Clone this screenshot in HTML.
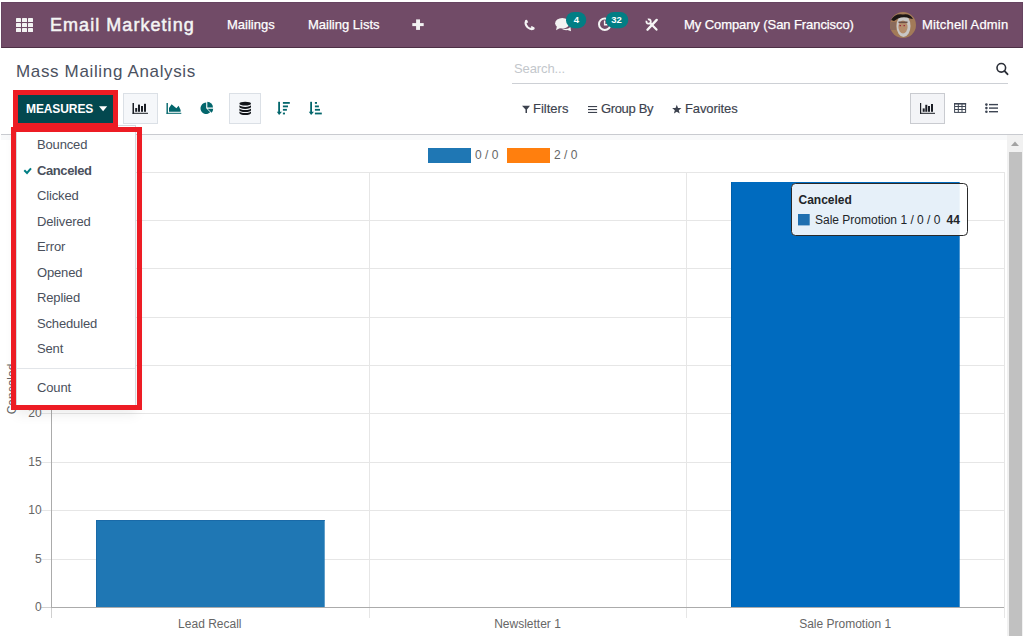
<!DOCTYPE html>
<html><head><meta charset="utf-8">
<style>
*{box-sizing:border-box;}
html,body{margin:0;padding:0;}
body{width:1024px;height:637px;position:relative;overflow:hidden;background:#fff;font-family:"Liberation Sans",sans-serif;}
.a{position:absolute;white-space:nowrap;}
#nav{position:absolute;left:1px;top:2px;width:1022px;height:46px;background:#714B67;border:1px solid #674461;border-bottom-color:#4d2f45;}
.nt{color:#fff;font-size:13px;line-height:16px;-webkit-text-stroke:0.25px #fff;}
#cp{position:absolute;left:1px;top:48px;width:1022px;height:87px;background:#fff;border-bottom:1px solid #c9cbd0;}
.ct{color:#3c424e;font-size:13px;line-height:16px;-webkit-text-stroke:0.15px #3c424e;}
.mi{color:#4a505c;font-size:13px;line-height:16px;left:37px;letter-spacing:-0.15px;}
.ax{color:#666;font-size:12px;line-height:14px;}
</style></head><body>

<!-- NAVBAR -->
<div id="nav"></div>
<svg class="a" style="left:0;top:0" width="1024" height="48">
  <g fill="#f3f3f3">
    <rect x="16" y="18" width="5" height="4" rx="0.6"/><rect x="22" y="18" width="5" height="4" rx="0.6"/><rect x="28" y="18" width="5" height="4" rx="0.6"/>
    <rect x="16" y="23" width="5" height="4" rx="0.6"/><rect x="22" y="23" width="5" height="4" rx="0.6"/><rect x="28" y="23" width="5" height="4" rx="0.6"/>
    <rect x="16" y="28" width="5" height="4" rx="0.6"/><rect x="22" y="28" width="5" height="4" rx="0.6"/><rect x="28" y="28" width="5" height="4" rx="0.6"/>
  </g>
</svg>
<div class="a" style="left:50px;top:15px;color:#f4f4f4;font-size:18px;letter-spacing:1.05px;-webkit-text-stroke:0.5px #f4f4f4;line-height:20px;">Email Marketing</div>
<div class="a nt" style="left:227px;top:17px;">Mailings</div>
<div class="a nt" style="left:308px;top:17px;">Mailing Lists</div>
<svg class="a" style="left:0;top:0" width="430" height="40"><rect x="416.1" y="19.4" width="3.9" height="10.5" fill="#f2f2f2"/><rect x="412.3" y="23.1" width="11.4" height="3" fill="#f2f2f2"/></svg>

<div class="a nt" style="left:684px;top:17px;letter-spacing:-0.08px;">My Company (San Francisco)</div>
<svg class="a" style="left:0;top:0" width="1024" height="48">
  <path d="M526.2 20.8 Q524.4 23.9 527.6 27.2 Q530.8 30.1 533.6 28.5" fill="none" stroke="#f4f4f4" stroke-width="2.1" stroke-linecap="round"/>
  <path d="M525 21 L526.8 19.7 L528.2 22.3 L526.7 23.3 Z M530.5 27.3 L531.7 25.9 L534.5 27.5 L533.6 29.3 Z" fill="#f4f4f4"/>
  <ellipse cx="562.3" cy="23.2" rx="7.2" ry="5.2" fill="#f2f2f2"/>
  <path d="M557 26 L556 30.2 L561 27.6 Z" fill="#f2f2f2"/>
  <path d="M563 28.4 Q567 30 570.5 27 L571 31.2 L567.5 30 Q564.5 30.5 562 29 Z" fill="#f2f2f2"/>
  <rect x="566" y="12" width="20.2" height="16.2" rx="8" fill="#017e84"/>
  <text x="576.4" y="22.5" text-anchor="middle" font-family="Liberation Sans" font-size="9.5" font-weight="bold" fill="#fff">4</text>
  <circle cx="604.8" cy="24.2" r="5.8" fill="none" stroke="#f4f4f4" stroke-width="2"/>
  <path d="M604.6 20.5 L604.6 24.8 L607.5 24.8" fill="none" stroke="#f4f4f4" stroke-width="1.4"/>
  <rect x="605.8" y="12" width="22.4" height="16.2" rx="8" fill="#017e84"/>
  <text x="616.6" y="22.5" text-anchor="middle" font-family="Liberation Sans" font-size="9.5" font-weight="bold" fill="#fff">32</text>
  <path d="M656.7 19.9 L647.5 29.7" stroke="#f6f6f6" stroke-width="2.4" stroke-linecap="round"/>
  <path d="M650.6 23.6 L656.5 29.6" stroke="#f6f6f6" stroke-width="2.2" stroke-linecap="round"/>
  <path d="M647.85 19.43 A2.2 2.2 0 1 1 646.53 20.75" fill="none" stroke="#f6f6f6" stroke-width="1.8"/>
  <clipPath id="av"><circle cx="903" cy="25" r="13"/></clipPath>
  <g clip-path="url(#av)">
    <rect x="889" y="11" width="28" height="28" fill="#a27a58"/>
    <rect x="890" y="22" width="6" height="8" fill="#8a6b5c"/>
    <ellipse cx="903.5" cy="26" rx="7" ry="11" fill="#c9c7c6"/>
    <ellipse cx="903" cy="27" rx="4.6" ry="6.5" fill="#b58d6c"/>
    <path d="M891 20 Q895 13 903 14.5 Q910 13 913 19 L910 18.5 Q904 16 898 18.5 L894 21 Z" fill="#1c1614"/>
    <rect x="898.5" y="21.5" width="9" height="1.6" fill="#6b5046"/>
    <rect x="899.5" y="25" width="1.5" height="1.2" fill="#9a2a3a"/><rect x="903.5" y="25" width="1.5" height="1.2" fill="#9a2a3a"/>
  </g>
</svg>
<div class="a nt" style="left:922px;top:17px;letter-spacing:0.18px;">Mitchell Admin</div>

<!-- CONTROL PANEL -->
<div id="cp"></div>
<div class="a" style="left:16px;top:62px;color:#4b5160;font-size:17px;line-height:20px;letter-spacing:0.65px;">Mass Mailing Analysis</div>
<div class="a" style="left:514px;top:61px;color:#c3c7cc;font-size:13px;line-height:16px;letter-spacing:-0.1px;">Search...</div>
<div class="a" style="left:512px;top:83px;width:496px;height:1px;background:#cdd0d5;"></div>


<!-- buttons row -->


<div class="a" style="left:123px;top:93px;width:35px;height:31px;background:#f5f7fa;border:1px solid #dbe0e6;"></div>
<div class="a" style="left:229px;top:93px;width:32px;height:31px;background:#f5f7fa;border:1px solid #dbe0e6;"></div>
<div class="a" style="left:910px;top:93px;width:35px;height:31px;background:#f3f4f7;border:1px solid #c9cbd0;"></div>

<svg class="a" style="left:0;top:0" width="1024" height="130">
  <g fill="#1b1e25">
    <rect x="132.5" y="103" width="1.5" height="10.8"/><rect x="132.5" y="112.8" width="15.5" height="1"/>
    <rect x="135.2" y="108" width="2" height="3.8"/><rect x="138" y="104.6" width="2" height="7.2"/>
    <rect x="141" y="106" width="2" height="5.8"/><rect x="144" y="103.8" width="2" height="8"/>
  </g>
  <g fill="#03666c">
    <rect x="166.5" y="103" width="1.4" height="10.8"/><rect x="166.5" y="112.8" width="14.8" height="1"/>
    <path d="M169 111.8 L169 108 L171.6 104.2 L176.4 108.2 L178.6 105.8 L180.6 110 L180.6 111.8 Z"/>
    <path d="M206.2 108.3 L206.2 102.6 A5.7 5.7 0 1 0 210.23 112.33 Z"/>
    <path d="M207.3 107.5 L207.3 101.8 A5.7 5.7 0 0 1 213 107.5 Z"/>
    <path d="M207.6 108.7 L213.2 108.7 A5.6 5.6 0 0 1 211.56 112.66 Z"/>
  </g>
  <g fill="#111419">
    <ellipse cx="245.2" cy="103.7" rx="5.8" ry="1.9"/>
    <path d="M239.4 105 A5.8 1.9 0 0 0 251 105 L251 107 A5.8 1.9 0 0 1 239.4 107 Z"/>
    <path d="M239.4 108.2 A5.8 1.9 0 0 0 251 108.2 L251 110.2 A5.8 1.9 0 0 1 239.4 110.2 Z"/>
    <path d="M239.4 111.2 A5.8 1.9 0 0 0 251 111.2 L251 113.1 A5.8 1.9 0 0 1 239.4 113.1 Z"/>
  </g>
  <g fill="#03666c">
    <rect x="278.2" y="101.8" width="1.8" height="10.6"/><path d="M276.8 111.8 L282 111.8 L279.1 114.9 Z"/>
    <rect x="282.9" y="102" width="6.9" height="1.8"/><rect x="282.9" y="105.5" width="5.1" height="1.8"/>
    <rect x="282.9" y="108.9" width="4" height="1.8"/><rect x="282.9" y="112.6" width="2.1" height="1.8"/>
    <rect x="310.2" y="101.8" width="1.8" height="10.6"/><path d="M308.8 111.8 L314 111.8 L311.1 114.9 Z"/>
    <rect x="314.9" y="102" width="2.1" height="1.8"/><rect x="314.9" y="105.5" width="4" height="1.8"/>
    <rect x="314.9" y="108.9" width="5.1" height="1.8"/><rect x="314.9" y="112.6" width="6.9" height="1.8"/>
  </g>
  <g fill="#3c424e">
    <path d="M522 105.8 L530 105.8 L527 109.5 L527 113 L525.5 113 L525.5 109.5 Z"/>
    <rect x="588" y="106" width="9.1" height="1.1"/><rect x="588" y="109" width="9.1" height="1.1"/><rect x="588" y="111.9" width="9.1" height="1.1"/>
    <path d="M676.80 104.70 L678.03 107.90 L681.46 108.09 L678.80 110.25 L679.68 113.56 L676.80 111.70 L673.92 113.56 L674.80 110.25 L672.14 108.09 L675.57 107.90 Z"/>
  </g>
  <g fill="#1b1e25">
    <rect x="920" y="103" width="1.2" height="10.8"/><rect x="920" y="112.8" width="15" height="1"/>
    <rect x="922.7" y="108.4" width="2" height="3.4"/><rect x="925.3" y="104.8" width="2" height="7"/>
    <rect x="928" y="106" width="2" height="5.8"/><rect x="931" y="104" width="2" height="7.8"/>
  </g>
  <g fill="none" stroke="#3d4553" stroke-width="1">
    <rect x="954.6" y="103.6" width="11" height="8.8"/>
    <line x1="958.3" y1="104" x2="958.3" y2="112"/><line x1="962" y1="104" x2="962" y2="112"/>
    <line x1="955" y1="106.5" x2="965.5" y2="106.5"/><line x1="955" y1="109.5" x2="965.5" y2="109.5"/>
  </g>
  <rect x="954.1" y="103" width="12" height="1.5" fill="#3d4553"/>
  <g fill="#3d4553">
    <circle cx="986.4" cy="104.6" r="1.3"/><circle cx="986.4" cy="108.1" r="1.3"/><circle cx="986.4" cy="111.7" r="1.3"/>
    <rect x="989" y="103.9" width="9" height="1.4"/><rect x="989" y="107.4" width="9" height="1.4"/><rect x="989" y="111" width="9" height="1.4"/>
  </g>
  <g fill="#222">
    <circle cx="1001.3" cy="67.8" r="4.3" fill="none" stroke="#2b2f38" stroke-width="1.6"/>
    <line x1="1004.4" y1="70.9" x2="1007.5" y2="74.2" stroke="#2b2f38" stroke-width="1.9" stroke-linecap="round"/>
  </g>
</svg>
<div class="a ct" style="left:533px;top:101px;">Filters</div>
<div class="a ct" style="left:601px;top:101px;letter-spacing:-0.35px;">Group By</div>
<div class="a ct" style="left:685px;top:101px;letter-spacing:-0.1px;">Favorites</div>

<!-- CHART -->
<svg class="a" style="left:0;top:0" width="1024" height="637" font-family="Liberation Sans" font-size="12">
<rect x="41" y="172" width="963" height="1" fill="#e6e6e6"/>
<rect x="41" y="220" width="963" height="1" fill="#e6e6e6"/>
<rect x="41" y="268" width="963" height="1" fill="#e6e6e6"/>
<rect x="41" y="317" width="963" height="1" fill="#e6e6e6"/>
<rect x="41" y="365" width="963" height="1" fill="#e6e6e6"/>
<rect x="41" y="413" width="963" height="1" fill="#e6e6e6"/>
<rect x="41" y="462" width="963" height="1" fill="#e6e6e6"/>
<rect x="41" y="510" width="963" height="1" fill="#e6e6e6"/>
<rect x="41" y="559" width="963" height="1" fill="#e6e6e6"/>
<rect x="369" y="172" width="1" height="446" fill="#e6e6e6"/>
<rect x="686" y="172" width="1" height="446" fill="#e6e6e6"/>
<rect x="1004" y="172" width="1" height="446" fill="#e6e6e6"/>
<rect x="41" y="607" width="10" height="1" fill="#d0d0d0"/>
<rect x="51" y="608" width="1" height="10" fill="#d0d0d0"/>
<rect x="51" y="172" width="1" height="435" fill="#ababab"/>
<rect x="51" y="607" width="953" height="1" fill="#ababab"/>
<text x="41.7" y="611.2" text-anchor="end" fill="#666">0</text>
<text x="41.7" y="563.2" text-anchor="end" fill="#666">5</text>
<text x="41.7" y="514.2" text-anchor="end" fill="#666">10</text>
<text x="41.7" y="466.2" text-anchor="end" fill="#666">15</text>
<text x="41.7" y="417.2" text-anchor="end" fill="#666">20</text>
<text x="41.7" y="369.2" text-anchor="end" fill="#666">25</text>
<text x="41.7" y="321.2" text-anchor="end" fill="#666">30</text>
<text x="41.7" y="272.2" text-anchor="end" fill="#666">35</text>
<text x="41.7" y="224.2" text-anchor="end" fill="#666">40</text>
<text x="41.7" y="176.2" text-anchor="end" fill="#666">45</text>
<text x="209.8" y="628" text-anchor="middle" fill="#666">Lead Recall</text>
<text x="527.5" y="628" text-anchor="middle" fill="#666">Newsletter 1</text>
<text x="845.2" y="628" text-anchor="middle" fill="#666">Sale Promotion 1</text>
<text transform="translate(15.5,389) rotate(-90)" text-anchor="middle" fill="#666">Canceled</text>
<rect x="96" y="520" width="228.7" height="87" fill="#1f77b4"/>
<rect x="96" y="520" width="1" height="87" fill="#1a6aa8"/><rect x="96" y="520" width="228.7" height="1" fill="#1a6aa8"/>
<rect x="731" y="182" width="228.7" height="425" fill="#006bbf"/><rect x="731" y="182" width="1" height="425" fill="#005fab"/>
<rect x="428" y="148" width="43" height="15" fill="#1f77b4"/>
<text x="475" y="158.8" fill="#666">0 / 0</text>
<rect x="507" y="148" width="43" height="15" fill="#ff7f0e"/>
<text x="554" y="158.8" fill="#666">2 / 0</text>
<rect x="791.5" y="183.5" width="176" height="52" rx="4" fill="rgba(255,255,255,0.9)" stroke="#2a2a2a" stroke-width="1"/>
<text x="798.5" y="204" font-weight="bold" fill="#212529">Canceled</text>
<rect x="798" y="214" width="11.7" height="11.4" fill="#1f6fb0"/>
<text x="815" y="224" fill="#212529">Sale Promotion 1 / 0 / 0</text>
<text x="946.5" y="224" font-weight="bold" fill="#212529">44</text>
</svg>
<!-- chart area strip -->
<div class="a" style="left:1px;top:135px;width:1006px;height:5px;background:#f8f9fa;"></div>
<!-- scrollbar -->
<div class="a" style="left:1007px;top:135px;width:16px;height:501px;background:#f1f1f1;"></div>
<div class="a" style="left:1009px;top:152px;width:13px;height:484px;background:#c1c1c1;"></div>
<svg class="a" style="left:1007px;top:135px" width="16" height="16"><path d="M4 11 L8 6.5 L12 11 Z" fill="#a3a3a3"/></svg>


<!-- DROPDOWN -->
<div class="a" style="left:16px;top:125px;width:120px;height:281px;background:#fff;border:1px solid #d6d9de;box-shadow:0 8px 12px rgba(0,0,0,0.08);"></div>
<div class="a" style="left:11px;top:127px;width:131px;height:283px;border:5px solid #ed1c24;"></div>
<div class="a mi" style="top:137px;">Bounced</div>
<svg class="a" style="left:0;top:0" width="40" height="200"><path d="M24.3 170.3 L27 173 L31 168.3" fill="none" stroke="#017e84" stroke-width="2"/></svg>
<div class="a mi" style="top:163px;font-weight:bold;letter-spacing:-0.4px;">Canceled</div>
<div class="a mi" style="top:188px;">Clicked</div>
<div class="a mi" style="top:214px;">Delivered</div>
<div class="a mi" style="top:239px;">Error</div>
<div class="a mi" style="top:265px;">Opened</div>
<div class="a mi" style="top:290px;">Replied</div>
<div class="a mi" style="top:316px;">Scheduled</div>
<div class="a mi" style="top:341px;">Sent</div>
<div class="a" style="left:17px;top:368px;width:118px;height:1px;background:#e2e5e9;"></div>
<div class="a mi" style="top:380px;">Count</div>

<div class="a" style="left:13px;top:90px;width:105px;height:37px;background:#ed1c24;"></div>
<div class="a" style="left:18px;top:95px;width:95px;height:28px;background:#03484f;"></div>
<div class="a" style="left:26px;top:102px;color:#fff;font-size:12px;font-weight:bold;line-height:14px;letter-spacing:-0.1px;">MEASURES</div>
<svg class="a" style="left:0;top:0" width="120" height="130"><path d="M99 106.2 L107.2 106.2 L103.1 111.2 Z" fill="#fff"/></svg>
</body></html>
